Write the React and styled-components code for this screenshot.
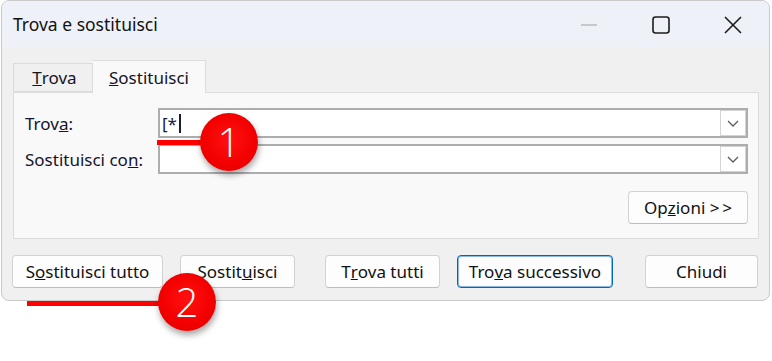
import React from 'react'
import styled, { createGlobalStyle } from 'styled-components';

const GlobalStyle = createGlobalStyle`
    html, body {
        margin: 0;
        padding: 0;
        background: #ffffff;
    }
    body {
        font-family: "Noto Sans", "Open Sans", sans-serif;
        color: #14141f;
    }
`;

function Key({ children }) {
    return <u>{children}</u>;
}

function Chevron() {
    return (
        <svg width="12" height="7" viewBox="0 0 12 7">
            <path d="M1 1 L6 6 L11 1" fill="none" stroke="#5c5c5c" strokeWidth="1.3" />
        </svg>
    );
}

function Combo({ children }) {
    return (
        <ComboBox>
            <ComboText>{children}</ComboText>
            <DropButton><Chevron /></DropButton>
        </ComboBox>
    );
}

export default function App() {
    return (
        <Page>
            <GlobalStyle />
            <Window>
                <TitleBar>
                    <Title>Trova e sostituisci</Title>
                    <Controls>
                        <Control>
                            <svg width="16" height="2" viewBox="0 0 16 2"><path d="M0 1 H16" stroke="#a0a0a0" strokeWidth="1.2" /></svg>
                        </Control>
                        <Control>
                            <svg width="18" height="18" viewBox="0 0 18 18"><rect x="1" y="1" width="16" height="16" rx="2.5" fill="none" stroke="#1c1c1c" strokeWidth="1.6" /></svg>
                        </Control>
                        <Control>
                            <svg width="18" height="18" viewBox="0 0 18 18"><path d="M1 1 L17 17 M17 1 L1 17" stroke="#1c1c1c" strokeWidth="1.6" /></svg>
                        </Control>
                    </Controls>
                </TitleBar>
                <Body>
                    <Tabs>
                        <Tab $w={80}><Key>T</Key>rova</Tab>
                        <Tab $active $w={113}><Key>S</Key>ostituisci</Tab>
                    </Tabs>
                    <Panel>
                        <Fields>
                            <Label>Trov<Key>a</Key>:</Label>
                            <Combo>[*<Caret /></Combo>
                            <Label>Sostituisci co<Key>n</Key>:</Label>
                            <Combo />
                        </Fields>
                        <OptionsRow>
                            <Button $w={120}>Op<Key>z</Key>ioni &gt;&#8201;&gt;</Button>
                        </OptionsRow>
                    </Panel>
                    <ButtonRow>
                        <Button $w={151} $ml={-1}>S<Key>o</Key>stituisci tutto</Button>
                        <Button $w={115} $ml={17}>Sostit<Key>u</Key>isci</Button>
                        <Button $w={115} $ml={30}>T<Key>r</Key>ova tutti</Button>
                        <Button $w={156} $ml={17} $default>Tro<Key>v</Key>a successivo</Button>
                        <Button $w={113} $ml={32}>Chiudi</Button>
                    </ButtonRow>
                </Body>
            </Window>

            <Marker style={{ left: 157, top: 140, width: 50 }} />
            <Badge style={{ left: 200, top: 113 }}>1</Badge>
            <Marker style={{ left: 27, top: 301, width: 138 }} />
            <Badge style={{ left: 158, top: 273 }}>2</Badge>
        </Page>
    );
}

const Page = styled.div`
    position: relative;
    width: 772px;
    height: 361px;
    overflow: hidden;
    background: #ffffff;
`;

const Window = styled.div`
    box-sizing: border-box;
    margin-left: 1px;
    width: 769px;
    height: 301px;
    border: 1px solid #c9c9c9;
    border-radius: 8px;
    background: #f0f0f0;
    overflow: hidden;
    display: flex;
    flex-direction: column;
`;

const TitleBar = styled.div`
    height: 47px;
    display: flex;
    align-items: center;
    background: #eff1f9;
    padding-left: 11px;
`;

const Title = styled.div`
    flex: 1;
    font-size: 17.5px;
    color: #111111;
    padding-bottom: 1px;
`;

const Controls = styled.div`
    display: flex;
    height: 100%;
`;

const Control = styled.div`
    width: 72px;
    display: flex;
    align-items: center;
    justify-content: center;
`;

const Body = styled.div`
    padding: 12px 10px 0 11px;
`;

const Tabs = styled.div`
    height: 32px;
    display: flex;
    align-items: flex-end;
`;

const Tab = styled.div`
    box-sizing: border-box;
    width: ${({ $w }) => $w}px;
    height: ${({ $active }) => ($active ? 33 : 29)}px;
    margin-bottom: ${({ $active }) => ($active ? -1 : 0)}px;
    border: 1px solid #dcdcdc;
    border-bottom: ${({ $active }) => ($active ? 'none' : '1px solid #dcdcdc')};
    border-left: ${({ $active }) => ($active ? 'none' : '1px solid #dcdcdc')};
    background: ${({ $active }) => ($active ? '#f9f9f9' : '#f0f0f0')};
    position: relative;
    z-index: ${({ $active }) => ($active ? 1 : 0)};
    display: flex;
    align-items: center;
    justify-content: center;
    font-size: 17px;
    padding-top: ${({ $active }) => ($active ? 1 : 0)}px;
    padding-left: ${({ $active }) => ($active ? 0 : 3)}px;
`;

const Panel = styled.div`
    box-sizing: border-box;
    height: 147px;
    border: 1px solid #dcdcdc;
    background: #f9f9f9;
    padding: 15px 10px 0 11px;
`;

const Fields = styled.div`
    display: grid;
    grid-template-columns: 133px 1fr;
    grid-auto-rows: 30px;
    row-gap: 6px;
    align-items: center;
`;

const Label = styled.div`
    font-size: 17px;
    color: #14142a;
    padding-top: 1px;
`;

const ComboBox = styled.div`
    box-sizing: border-box;
    height: 30px;
    border: 2px solid #adadad;
    background: #ffffff;
    display: flex;
    align-items: stretch;
`;

const ComboText = styled.div`
    flex: 1;
    display: flex;
    align-items: center;
    padding-left: 2px;
    font-size: 17px;
    color: #1b1b3b;
`;

const Caret = styled.span`
    display: inline-block;
    width: 2px;
    height: 19px;
    margin-left: 2px;
    background: #1b1b3b;
`;

const DropButton = styled.div`
    box-sizing: border-box;
    width: 26px;
    border: 1px solid #d4d4d4;
    background: #ffffff;
    display: flex;
    align-items: center;
    justify-content: center;
`;

const OptionsRow = styled.div`
    display: flex;
    justify-content: flex-end;
    margin-top: 17px;
`;

const ButtonRow = styled.div`
    display: flex;
    margin-top: 16px;
`;

const Button = styled.div`
    box-sizing: border-box;
    width: ${({ $w }) => $w}px;
    margin-left: ${({ $ml }) => $ml || 0}px;
    height: 33px;
    border-radius: 4px;
    border: 1px solid ${({ $default }) => ($default ? '#0067c0' : '#d2d2d2')};
    border-bottom-color: ${({ $default }) => ($default ? '#0067c0' : '#bdbdbd')};
    box-shadow: ${({ $default }) => ($default ? 'inset 0 0 0 1px rgba(0, 103, 192, 0.45)' : 'none')};
    background: #fdfdfd;
    display: flex;
    align-items: center;
    justify-content: center;
    font-size: 17px;
    color: #111111;
    padding-bottom: 1px;
`;

const Marker = styled.div`
    position: absolute;
    height: 5px;
    background: #ff0000;
`;

const Badge = styled.div`
    position: absolute;
    width: 58px;
    height: 58px;
    border-radius: 50%;
    background: radial-gradient(circle at 50% 45%, #ff1010 0%, #f20000 60%, #d80000 100%);
    box-shadow: 1px 4px 6px rgba(0, 0, 0, 0.35);
    color: #ffffff;
    font-family: "Open Sans", "Noto Sans", sans-serif;
    font-weight: 300;
    font-size: 40px;
    display: flex;
    align-items: center;
    justify-content: center;
    line-height: 1;
`;
